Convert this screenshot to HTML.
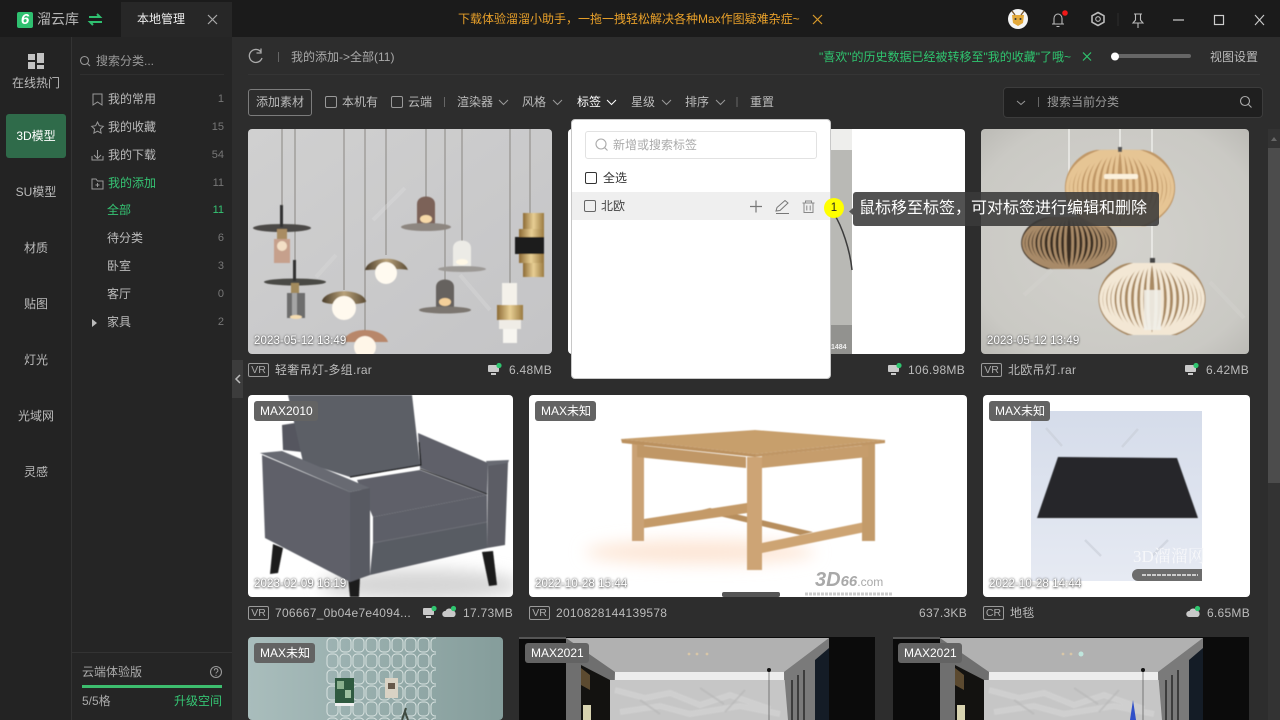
<!DOCTYPE html>
<html lang="zh">
<head>
<meta charset="utf-8">
<title>溜云库</title>
<style>
html,body{margin:0;padding:0;width:1280px;height:720px;overflow:hidden;background:#2d2d2d}
body{position:relative;font-family:"Liberation Sans","Noto Sans CJK SC",sans-serif;font-size:12px;color:#bbb}
svg{position:absolute;left:0;top:0;display:block}
.b{position:absolute}
.t{position:absolute;white-space:nowrap;line-height:16px;height:16px}
.r{text-align:right}
.c{text-align:center}
.g{color:#35c473}
.n{font-size:11px;color:#777}
.l{letter-spacing:.28px}
.tag{position:absolute;height:20px;line-height:20px;padding:0 5px 0 6px;background:#636363;border-radius:3px;color:#fff;font-size:12px;white-space:nowrap}
.date{position:absolute;color:#fff;font-size:11.5px;letter-spacing:.1px;line-height:14px;white-space:nowrap;text-shadow:0 0 2px #555,0 1px 2px #666}
.vr{position:absolute;width:19px;height:12px;border:1px solid #9a9a9a;border-radius:2px;font-size:10.5px;line-height:12px;text-align:center;color:#aaa}
.cb{position:absolute;width:10px;height:10px;border:1px solid #999;border-radius:2px}
</style>
</head>
<body>
<svg width="1280" height="720" viewBox="0 0 1280 720" xmlns="http://www.w3.org/2000/svg">
<defs>
<linearGradient id="gA" x1="0" y1="0" x2="1" y2="1"><stop offset="0" stop-color="#d0d0d0"/><stop offset="1" stop-color="#c4c4c6"/></linearGradient>
<radialGradient id="gW" cx=".5" cy=".5" r=".8"><stop offset="0" stop-color="#d3d2cd"/><stop offset=".7" stop-color="#cac9c4"/><stop offset="1" stop-color="#b2b1ac"/></radialGradient>
<linearGradient id="gGold" x1="0" y1="0" x2="1" y2="0"><stop offset="0" stop-color="#8c6a35"/><stop offset=".5" stop-color="#e8cf94"/><stop offset="1" stop-color="#9a7a40"/></linearGradient>
<linearGradient id="gBrass" x1="0" y1="0" x2="1" y2="0"><stop offset="0" stop-color="#4a3d2a"/><stop offset=".5" stop-color="#b9a27a"/><stop offset="1" stop-color="#5c4d36"/></linearGradient>
<linearGradient id="gTeal" x1="0" y1="0" x2="1" y2="0"><stop offset="0" stop-color="#a9bdbc"/><stop offset=".4" stop-color="#9ab0af"/><stop offset="1" stop-color="#859d9b"/></linearGradient>
<linearGradient id="gRugBg" x1="0" y1="0" x2="0" y2="1"><stop offset="0" stop-color="#d5dcea"/><stop offset="1" stop-color="#e6eaf3"/></linearGradient>
<pattern id="net" x="326" y="637" width="13" height="16" patternUnits="userSpaceOnUse"><rect x="1" y="1" width="11" height="14" rx="4" fill="none" stroke="#d8e2e0" stroke-width="1"/></pattern>
<filter id="s1" x="-20%" y="-20%" width="140%" height="140%"><feGaussianBlur stdDeviation=".5"/></filter>
<filter id="s3" x="-40%" y="-40%" width="180%" height="180%"><feGaussianBlur stdDeviation="3"/></filter>
<filter id="s8" x="-40%" y="-100%" width="180%" height="300%"><feGaussianBlur stdDeviation="8"/></filter>
<clipPath id="c1"><rect x="248" y="129" width="304" height="225" rx="4"/></clipPath>
<clipPath id="c2"><rect x="568" y="129" width="397" height="225" rx="4"/></clipPath>
<clipPath id="c3"><rect x="981" y="129" width="268" height="225" rx="4"/></clipPath>
<clipPath id="c4"><rect x="248" y="395" width="265" height="202" rx="4"/></clipPath>
<clipPath id="c7"><rect x="248" y="637" width="255" height="83" rx="4"/></clipPath>
<clipPath id="cageClip"><path d="M-22,-36C-38,-34-52,-18-52,0C-52,18-38,30-24,36L24,36C38,30 52,18 52,0C52,-18 38,-34 22,-36Z"/></clipPath>
<g id="stripes" fill="none" clip-path="url(#cageClip)">
<ellipse rx="4" ry="37"/><ellipse rx="10" ry="37"/><ellipse rx="16" ry="37"/><ellipse rx="22" ry="37"/><ellipse rx="28" ry="37"/><ellipse rx="33" ry="37"/><ellipse rx="38" ry="37"/><ellipse rx="42" ry="37"/><ellipse rx="46" ry="37"/><ellipse rx="49.5" ry="37"/>
</g>
<g id="room">
<rect x="519" y="637" width="356" height="83" fill="#0b0b0b"/>
<rect x="566" y="638" width="263" height="82" fill="#8d8d8d"/>
<polygon points="566,638 829,638 784,672 615,672" fill="#b1b1b1"/>
<polygon points="566,638 615,672 610,720 566,720" fill="#6f6f6f"/>
<polygon points="581,665 610,680 610,720 581,720" fill="#131210"/>
<polygon points="581,668 590,675 590,690 581,685" fill="#5c4a30"/>
<rect x="583" y="705" width="8" height="15" fill="#d8d3b0"/>
<rect x="615" y="672" width="169" height="8" fill="#ededed"/>
<rect x="610" y="680" width="178" height="40" fill="#c6c6c6"/>
<path d="M615,690l30,8 25,-5 30,12 30,-10 40,14M620,712l40,-6 30,8 50,-8 40,8" stroke="#d4d4d4" stroke-width="6" fill="none" opacity=".7" filter="url(#s1)"/>
<path d="M640,700l20,14M700,688l24,16M745,690l-20,22" stroke="#b6b6b6" stroke-width="2" fill="none" opacity=".6" filter="url(#s1)"/>
<polygon points="784,672 829,638 829,720 788,720" fill="#7a7a7a"/>
<path d="M792,680V720M798,675V720M804,670V720" stroke="#3d3d3d" stroke-width="2"/>
<polygon points="815,660 829,648 829,720 815,720" fill="#141c26"/>
<circle cx="769" cy="670" r="2" fill="#111"/><path d="M769,672V720" stroke="#555" stroke-width=".7"/>
<circle cx="689" cy="654" r="1.4" fill="#d8c6a8"/><circle cx="697" cy="654" r="1.4" fill="#d8c6a8"/><circle cx="707" cy="654" r="1.4" fill="#d8c6a8"/>
<rect x="519" y="637" width="47" height="2" fill="#555"/>
</g>
<g id="pc"><rect x="0" y="1" width="11" height="7" rx="1" fill="#c9c9c9"/><rect x="3" y="9" width="5" height="2" fill="#c9c9c9"/><circle cx="11" cy="1.5" r="2.6" fill="#2fc56f"/></g>
<g id="cloud"><path d="M2,10a3,3 0 0 1 .5,-6a4,4 0 0 1 7.2,-.5a3.4,3.4 0 0 1 .8,6.5Z" fill="#c9c9c9"/><circle cx="10.5" cy="1.5" r="2.6" fill="#2fc56f"/></g>
</defs>

<!-- card 1 -->
<g clip-path="url(#c1)">
<rect x="248" y="129" width="304" height="225" fill="url(#gA)"/>
<g stroke="#8a8782" stroke-width="1" fill="none">
<path d="M282,129V205M295,129V280M344,129V290M365,129V335M386,129V255M426,129V200M445,129V280M462,129V245M510,129V285M530,129V215"/>
</g>
<g filter="url(#s1)">
<ellipse cx="282" cy="228" rx="29" ry="4" fill="#4c4a46"/><rect x="280" y="205" width="3" height="22" fill="#333"/>
<rect x="277" y="229" width="10" height="12" fill="#a98c62"/><rect x="274" y="239" width="16" height="24" fill="#c6a08c"/><circle cx="282" cy="246" r="5" fill="#f3dfc6"/>
<ellipse cx="295" cy="282" rx="31" ry="3.5" fill="#4a4844"/><rect x="293" y="260" width="3" height="21" fill="#333"/>
<rect x="291" y="283" width="8" height="10" fill="#a28a5c"/><rect x="287" y="293" width="18" height="25" fill="#6d6d6d"/><rect x="292" y="293" width="5" height="25" fill="#a5a5a5"/><ellipse cx="296" cy="317" rx="6" ry="2" fill="#f5dcb0"/>
<path d="M322,301C326,288 362,288 366,301C368,305 324,306 322,301Z" fill="url(#gBrass)"/><circle cx="344" cy="308" r="12" fill="#fff9ee"/>
<path d="M365,335V331" stroke="#b59a60" stroke-width="2"/>
<path d="M343,342C347,326 383,326 388,342Z" fill="#b8876a"/><circle cx="365" cy="347" r="11" fill="#fff6e8"/>
<path d="M365,270C368,256 402,254 408,270C404,268 370,270 365,270Z" fill="url(#gBrass)"/><circle cx="386" cy="273" r="11" fill="#fffaf0"/>
<path d="M417,224V204C417,194 435,194 435,204V224Z" fill="#7b6259"/><ellipse cx="426" cy="219" rx="6" ry="4" fill="#f7d9a8"/><ellipse cx="426" cy="227" rx="25" ry="4" fill="#8d8680"/>
<path d="M453,266V248C453,238 471,238 471,248V266Z" fill="#ecebe6"/><ellipse cx="462" cy="262" rx="6" ry="3" fill="#fff8e6"/><ellipse cx="462" cy="269" rx="24" ry="3" fill="#9c9995"/>
<path d="M436,308V287C436,277 454,277 454,287V308Z" fill="#66625e"/><ellipse cx="445" cy="302" rx="6" ry="4" fill="#f4d09a"/><ellipse cx="445" cy="310" rx="26" ry="3.5" fill="#7c766f"/>
<rect x="523" y="213" width="21" height="64" fill="url(#gGold)"/><rect x="519" y="229" width="25" height="10" fill="url(#gGold)"/><rect x="515" y="237" width="29" height="17" fill="#1f1c1a"/><rect x="519" y="254" width="24" height="9" fill="url(#gGold)"/>
<rect x="502" y="283" width="15" height="22" fill="#f4f1ea"/><rect x="497" y="305" width="26" height="15" fill="url(#gGold)"/><rect x="499" y="320" width="22" height="9" fill="#efece6"/><rect x="503" y="329" width="14" height="14" fill="#f7f5f0"/>
</g>
<g stroke="#dcdcdc" stroke-width="4" opacity=".35"><path d="M373,220L405,188M316,277L336,255M460,275L490,310"/></g>
</g>

<!-- card 2 visible part -->
<g clip-path="url(#c2)">
<rect x="568" y="129" width="397" height="225" fill="#fff"/>
<rect x="790" y="129" width="62" height="21" fill="#eeeeec"/>
<rect x="790" y="150" width="62" height="175" fill="#b9b9b5"/>
<rect x="790" y="325" width="62" height="29" fill="#92928f"/>
<path d="M834,214C842,226 850,250 852,270" stroke="#3c3c3c" stroke-width="1.5" fill="none"/>
<text x="831" y="349" font-size="7" fill="#eee" font-family="Liberation Sans,sans-serif" font-weight="700">1484</text>
</g>

<!-- card 3 -->
<g clip-path="url(#c3)">
<rect x="981" y="129" width="268" height="225" fill="url(#gW)"/>
<path d="M1069,129V215M1120,129V150M1152,129V263" stroke="#efefec" stroke-width="1.4" fill="none"/>
<g filter="url(#s1)">
<g transform="translate(1069,243) scale(.92,.72)"><path d="M-22,-36C-38,-34-52,-18-52,0C-52,18-38,30-24,36L24,36C38,30 52,18 52,0C52,-18 38,-34 22,-36Z" fill="#3a2d22"/><use href="#stripes" stroke="#a88a68" stroke-width="3"/></g>
<g transform="translate(1120,188) scale(1.06,1.06)"><path d="M-22,-36C-38,-34-52,-18-52,0C-52,18-38,30-24,36L24,36C38,30 52,18 52,0C52,-18 38,-34 22,-36Z" fill="#c09766"/><use href="#stripes" stroke="#e6c594" stroke-width="3.2"/></g>
<rect x="1104" y="174" width="34" height="5" fill="#fbf0dc" rx="2"/>
<rect x="1118" y="147" width="4" height="5" fill="#555"/>
<rect x="1150" y="258" width="5" height="7" fill="#444"/>
<g transform="translate(1152,299) scale(1.03,1)"><path d="M-22,-36C-38,-34-52,-18-52,0C-52,18-38,30-24,36L24,36C38,30 52,18 52,0C52,-18 38,-34 22,-36Z" fill="#a98a64"/><use href="#stripes" stroke="#f3e7d4" stroke-width="3.2"/></g>
<rect x="1144" y="290" width="17" height="40" fill="#f1eee8" opacity=".9"/>
</g>
<path d="M1024,295L1052,270M1210,282L1244,318" stroke="#d6d5d1" stroke-width="4" opacity=".35"/>
</g>

<!-- card 4 armchair -->
<g clip-path="url(#c4)">
<rect x="248" y="395" width="265" height="202" fill="#fff"/>
<ellipse cx="420" cy="585" rx="100" ry="16" fill="#d6d6d6" filter="url(#s8)"/>
<g filter="url(#s1)">
<polygon points="273,544 283,548 278,573 270,574" fill="#1d1d1d"/>
<polygon points="482,552 493,551 497,585 489,586" fill="#1d1d1d"/>
<polygon points="348,578 360,578 359,597 350,597" fill="#1d1d1d"/>
<polygon points="282,425 295,423 302,452 283,450" fill="#55575f"/>
<polygon points="418,433 488,463 487,495 420,468" fill="#5f6169"/>
<polygon points="288,395 412,395 420,465 350,477 303,462" fill="#5c5e66"/>
<path d="M419,442L421,465 350,477" stroke="#111" stroke-width="1.2" fill="none"/>
<polygon points="357,480 420,470 487,495 373,517" fill="#5f6169"/>
<path d="M420,469L487,494" stroke="#222" stroke-width="1"/>
<polygon points="373,517 487,495 487,522 373,543" fill="#5d5f67"/>
<polygon points="373,543 487,522 487,548 370,575" fill="#595b63"/>
<path d="M373,543L487,522" stroke="#6d6f77" stroke-width="1"/>
<polygon points="488,463 508,462 505,545 487,548" fill="#5b5d65"/>
<polygon points="486,461 509,460 508,463 488,466" fill="#686a72"/>
<polygon points="262,455 350,492 350,582 265,538" fill="#5f6169"/>
<polygon points="260,453 282,451 370,488 350,492" fill="#686a72"/>
<polygon points="350,492 370,488 370,575 350,582" fill="#585a62"/>
</g>
</g>

<!-- card 5 table -->
<rect x="529" y="395" width="438" height="202" rx="4" fill="#fff"/>
<ellipse cx="700" cy="552" rx="115" ry="12" fill="#fde6d6" filter="url(#s8)"/>
<g filter="url(#s1)">
<polygon points="698,511 710,508 813,532 800,535" fill="#b78e5d"/>
<polygon points="644,519 747,503 747,513 644,528" fill="#c49a68"/>
<polygon points="762,543 865,522 865,532 762,553" fill="#cda473"/>
<rect x="632" y="443" width="12" height="98" fill="#caa274"/>
<rect x="862" y="443" width="13" height="98" fill="#c39b6b"/>
<polygon points="637,445 746,457 746,468 637,457" fill="#c09766"/>
<polygon points="762,456 868,445 868,457 762,468" fill="#c69d6c"/>
<rect x="747" y="457" width="15" height="113" fill="#cda474"/>
<polygon points="621,439 755,430 885,440 755,454" fill="#c79f6c"/>
<polygon points="621,439 755,454 755,457 622,443" fill="#bb915f"/>
<polygon points="755,454 885,440 885,443 755,457" fill="#c09665"/>
</g>
<text x="815" y="586" font-family="Liberation Sans,sans-serif" font-size="20" font-weight="700" font-style="italic" fill="#a9a9a9">3D<tspan font-size="15">66</tspan><tspan font-size="12" font-style="normal" font-weight="400">.com</tspan></text>
<rect x="722" y="592" width="58" height="5" rx="2" fill="#555"/>
<path d="M805,594H892" stroke="#ccc" stroke-width="3" stroke-dasharray="3 1"/>

<!-- card 6 rug -->
<rect x="983" y="395" width="267" height="202" rx="4" fill="#fff"/>
<rect x="1031" y="411" width="171" height="170" fill="url(#gRugBg)"/>
<polygon points="1058,457 1177,458 1198,518 1037,518" fill="#25272c" filter="url(#s1)"/>
<path d="M1046,428l16,18M1122,447l16,-18M1085,540l16,16M1152,556l16,-16" stroke="#c9ced8" stroke-width="2.5" opacity=".6"/>
<text x="1133" y="562" font-family="Liberation Serif,Noto Serif CJK SC,serif" font-size="17" fill="#f6f7fa">3D溜溜网</text>
<path d="M1138,569H1202V581H1138A6,6 0 0 1 1138,569Z" fill="#6c6c6c"/>
<path d="M1142,575H1198" stroke="#ccc" stroke-width="2" stroke-dasharray="4 1"/>

<!-- row 3 -->
<g clip-path="url(#c7)">
<rect x="248" y="637" width="255" height="83" fill="url(#gTeal)"/>
<rect x="326" y="637" width="110" height="83" fill="url(#net)"/>
<rect x="335" y="678" width="19" height="27" fill="#2f5a40"/><rect x="337" y="681" width="7" height="8" fill="#8ab08e"/><rect x="345" y="690" width="6" height="8" fill="#9dc0a0"/><rect x="335" y="703" width="19" height="3" fill="#f0f0f0"/>
<rect x="385" y="678" width="13" height="20" fill="#d9d2c4"/><rect x="388" y="683" width="7" height="6" fill="#66584a"/>
<path d="M402,720L406,708M408,720L405,712" stroke="#3f4b40" stroke-width="2"/>
</g>
<use href="#room"/>
<use href="#room" x="374"/>
<path d="M1133,700L1136,720H1130Z" fill="#3050c8"/>
<circle cx="1081" cy="654" r="2.5" fill="#bfe6dd"/>

<!-- status icons -->
<use href="#pc" x="488" y="364"/>
<use href="#pc" x="888" y="364"/>
<use href="#pc" x="1185" y="364"/>
<use href="#pc" x="423" y="607"/>
<use href="#cloud" x="443" y="607"/>
<use href="#cloud" x="1187" y="607"/>
</svg>

<!-- chrome -->
<div class="b" style="left:0;top:0;width:1280px;height:37px;background:#1b1b1b"></div>
<div class="b" style="left:121px;top:2px;width:111px;height:35px;background:#272727"></div>
<div class="b" style="left:0;top:37px;width:71px;height:683px;background:#232323;border-right:1px solid #333"></div>
<div class="b" style="left:72px;top:37px;width:160px;height:683px;background:#252525"></div>
<div class="b" style="left:1268px;top:129px;width:12px;height:591px;background:#333"></div>
<div class="b" style="left:1268px;top:148px;width:12px;height:335px;background:#4c4c4c"></div>
<div class="b" style="left:232px;top:360px;width:11px;height:38px;background:#3c3c3c"></div>
<div class="b" style="left:1003px;top:87px;width:258px;height:29px;background:#1f1f1f;border:1px solid #3c3c3c;border-radius:4px"></div>
<div class="b" style="left:248px;top:74px;width:1012px;height:1px;background:#353535"></div>
<div class="b" style="left:80px;top:74px;width:144px;height:1px;background:#2f2f2f"></div>
<div class="b" style="left:72px;top:652px;width:160px;height:1px;background:#333"></div>
<div class="b" style="left:82px;top:685px;width:140px;height:3px;background:#3dbd6e"></div>
<div class="b" style="left:6px;top:114px;width:60px;height:44px;background:#2f6b4a;border-radius:3px"></div>

<!-- chrome icons -->
<svg width="1280" height="720" viewBox="0 0 1280 720" xmlns="http://www.w3.org/2000/svg" style="pointer-events:none">
<rect x="17" y="12" width="16" height="16" rx="2" fill="#2fc070"/>
<path d="M89,17H100L97,14M102,22H90L93,25" fill="none" stroke="#2fc070" stroke-width="2"/>
<path d="M208,15L217,24M217,15L208,24" stroke="#aaa" stroke-width="1.2"/>
<path d="M813,15L822,24M822,15L813,24" stroke="#d99a2b" stroke-width="1.2"/>
<circle cx="1018" cy="19" r="10" fill="#f4f4f4"/>
<path d="M1012,15L1024,15 1023,23 1018,26 1013,23Z" fill="#e3a93b"/>
<path d="M1012,11l3,4M1024,11l-3,4" stroke="#7b5a33" stroke-width="1.4"/>
<circle cx="1015.5" cy="19" r="1" fill="#333"/><circle cx="1020.5" cy="19" r="1" fill="#333"/>
<path d="M1052,24H1064M1054,24V18.5A4,4.5 0 0 1 1062,18.5V24M1056.5,26.5H1059.5" fill="none" stroke="#bbb" stroke-width="1.1"/>
<circle cx="1065" cy="13" r="2.8" fill="#f01818"/>
<path d="M1098,12.5l6,3.300v6.400l-6,3.300-6,-3.300v-6.400Z" fill="none" stroke="#bbb" stroke-width="1.6" stroke-linejoin="round"/><circle cx="1098" cy="19" r="2.3" fill="none" stroke="#bbb" stroke-width="1.1"/>
<path d="M1118,13V26" stroke="#2e2e2e"/>
<path d="M1134,14H1142M1135.5,14V20L1133,23H1143L1140.5,20V14M1138,23V28" fill="none" stroke="#bbb" stroke-width="1.1"/>
<path d="M1173,20H1184" stroke="#ccc" stroke-width="1.2"/>
<rect x="1214.5" y="15.5" width="9" height="9" fill="none" stroke="#ccc" stroke-width="1.2"/>
<path d="M1255,15L1264,25M1264,15L1255,25" stroke="#ccc" stroke-width="1.1"/>
<rect x="28" y="54" width="7" height="6" fill="#c2c2c2"/><rect x="37" y="53" width="7" height="10" fill="#c2c2c2"/><rect x="28" y="62" width="7" height="7" fill="#c2c2c2"/><rect x="37" y="65" width="7" height="4" fill="#c2c2c2"/>
<circle cx="84.5" cy="60.5" r="4" fill="none" stroke="#999" stroke-width="1.1"/><path d="M87.5,63.5L90,66" stroke="#999" stroke-width="1.1"/>
<path d="M93,94H102V105L97.5,102 93,105Z" fill="none" stroke="#999"/>
<path d="M97.5,122l1.800,3.700 4,.6-2.900,2.800.7,4-3.600,-1.900-3.600,1.900.7,-4-2.900,-2.800 4,-.6Z" fill="none" stroke="#999"/>
<path d="M97.5,150V158M94,155l3.500,3.500 3.500,-3.500M92,156V160H103V156" fill="none" stroke="#999"/>
<path d="M92,179H96L97.5,181H103V189H92ZM97.5,183V187M95.5,185H99.5" fill="none" stroke="#999"/>
<path d="M92,319L97,323 92,327Z" fill="#bbb"/>
<circle cx="216" cy="672" r="5.5" fill="none" stroke="#999" stroke-width="1.1"/>
<path d="M214.3,670.5a1.800,1.800 0 1 1 2.700,1.500c-.7,.4-1,.8-1,1.500" fill="none" stroke="#999"/><circle cx="216" cy="675.3" r=".6" fill="#999"/>
<path d="M261,52A6.5,6.5 0 1 0 262,58M261,48.5V53H256.5" fill="none" stroke="#aaa" stroke-width="1.3"/>
<path d="M278.5,52V62" stroke="#666"/>
<path d="M1083,52.5L1091,60.5M1091,52.5L1083,60.5" stroke="#2fc56f" stroke-width="1.2"/>
<rect x="1112" y="54" width="79" height="4" rx="2" fill="#666"/><circle cx="1115" cy="56.5" r="4" fill="#fff"/>
<g fill="none" stroke="#999" stroke-width="1">
<path d="M499,100l4.500,4.500 4.500,-4.500M553,100l4.500,4.500 4.500,-4.500M662,100l4.500,4.500 4.500,-4.500M716,100l4.500,4.500 4.500,-4.500"/>
<path d="M607,100l4.500,4.500 4.500,-4.500" stroke="#fff"/>
<path d="M1017,101l4,3.500 4,-3.500"/>
</g>
<path d="M444.5,97V107M737,97V107M1038.5,97V107" stroke="#666"/>
<circle cx="1245" cy="101" r="4.5" fill="none" stroke="#aaa" stroke-width="1.1"/><path d="M1248.5,104.5L1251.5,107.5" stroke="#aaa" stroke-width="1.1"/>
<path d="M240,375L236,379 240,383" fill="none" stroke="#bbb" stroke-width="1.5"/>
<path d="M1271,141L1274,137 1277,141Z" fill="#666"/>
</svg>

<!-- title bar text -->
<div class="t c" style="left:17px;top:12px;width:16px;color:#fff;font-size:15px;font-weight:700;font-style:italic">6</div>
<div class="t" style="left:37px;top:11px;font-size:14px;color:#b5b5b5">溜云库</div>
<div class="t" style="left:137px;top:11px;color:#eee">本地管理</div>
<div class="t" style="left:458px;top:11px;color:#e8a02a;width:346px">下载体验溜溜小助手，一拖一拽轻松解决各种Max作图疑难杂症~</div>

<!-- nav -->
<div class="t c" style="left:0;top:75px;width:72px;color:#bbb">在线热门</div>
<div class="t c" style="left:0;top:128px;width:72px;color:#fff">3D模型</div>
<div class="t c" style="left:0;top:184px;width:72px">SU模型</div>
<div class="t c" style="left:0;top:240px;width:72px">材质</div>
<div class="t c" style="left:0;top:296px;width:72px">贴图</div>
<div class="t c" style="left:0;top:352px;width:72px">灯光</div>
<div class="t c" style="left:0;top:408px;width:72px">光域网</div>
<div class="t c" style="left:0;top:464px;width:72px">灵感</div>

<!-- category -->
<div class="t" style="left:96px;top:53px;color:#999">搜索分类...</div>
<div class="t" style="left:108px;top:91px">我的常用</div><div class="t r n" style="left:184px;top:91px;width:40px">1</div>
<div class="t" style="left:108px;top:119px">我的收藏</div><div class="t r n" style="left:184px;top:119px;width:40px">15</div>
<div class="t" style="left:108px;top:147px">我的下载</div><div class="t r n" style="left:184px;top:147px;width:40px">54</div>
<div class="t g" style="left:108px;top:175px">我的添加</div><div class="t r n" style="left:184px;top:175px;width:40px">11</div>
<div class="t g" style="left:107px;top:202px">全部</div><div class="t r n" style="left:184px;top:202px;width:40px;color:#35c473">11</div>
<div class="t" style="left:107px;top:230px">待分类</div><div class="t r n" style="left:184px;top:230px;width:40px">6</div>
<div class="t" style="left:107px;top:258px">卧室</div><div class="t r n" style="left:184px;top:258px;width:40px">3</div>
<div class="t" style="left:107px;top:286px">客厅</div><div class="t r n" style="left:184px;top:286px;width:40px">0</div>
<div class="t" style="left:107px;top:314px">家具</div><div class="t r n" style="left:184px;top:314px;width:40px">2</div>
<div class="t" style="left:82px;top:664px;color:#aaa">云端体验版</div>
<div class="t" style="left:82px;top:693px;color:#aaa">5/5格</div>
<div class="t r g" style="left:162px;top:693px;width:60px">升级空间</div>

<!-- toolbar -->
<div class="t" style="left:291px;top:49px;color:#aaa">我的添加-&gt;全部(11)</div>
<div class="t" style="left:819px;top:49px;color:#2fc56f;width:258px">"喜欢"的历史数据已经被转移至"我的收藏"了哦~</div>
<div class="t" style="left:1210px;top:49px">视图设置</div>
<div class="b" style="left:248px;top:89px;width:62px;height:25px;border:1px solid #7c7c7c;border-radius:3px;line-height:25px;text-align:center">添加素材</div>
<div class="cb" style="left:325px;top:96px"></div>
<div class="t" style="left:342px;top:94px">本机有</div>
<div class="cb" style="left:391px;top:96px"></div>
<div class="t" style="left:408px;top:94px">云端</div>
<div class="t" style="left:457px;top:94px">渲染器</div>
<div class="t" style="left:522px;top:94px">风格</div>
<div class="t" style="left:577px;top:94px;color:#fff">标签</div>
<div class="t" style="left:631px;top:94px">星级</div>
<div class="t" style="left:685px;top:94px">排序</div>
<div class="t" style="left:750px;top:94px">重置</div>
<div class="t" style="left:1047px;top:94px;color:#999">搜索当前分类</div>

<!-- card overlays -->
<div class="date" style="left:254px;top:334px">2023-05-12 13:49</div>
<div class="date" style="left:987px;top:334px">2023-05-12 13:49</div>
<div class="date" style="left:254px;top:577px">2023-02-09 16:19</div>
<div class="date" style="left:535px;top:577px">2022-10-28 15:44</div>
<div class="date" style="left:989px;top:577px">2022-10-28 14:44</div>
<div class="tag" style="left:254px;top:401px">MAX2010</div>
<div class="tag" style="left:535px;top:401px">MAX未知</div>
<div class="tag" style="left:989px;top:401px">MAX未知</div>
<div class="tag" style="left:254px;top:643px">MAX未知</div>
<div class="tag" style="left:525px;top:643px">MAX2021</div>
<div class="tag" style="left:898px;top:643px">MAX2021</div>

<div class="vr" style="left:248px;top:363px">VR</div><div class="t l" style="left:275px;top:362px">轻奢吊灯-多组.rar</div><div class="t r l" style="left:452px;top:362px;width:100px">6.48MB</div>
<div class="t r l" style="left:865px;top:362px;width:100px">106.98MB</div>
<div class="vr" style="left:981px;top:363px">VR</div><div class="t l" style="left:1008px;top:362px">北欧吊灯.rar</div><div class="t r l" style="left:1149px;top:362px;width:100px">6.42MB</div>
<div class="vr" style="left:248px;top:606px">VR</div><div class="t l" style="left:275px;top:605px">706667_0b04e7e4094...</div><div class="t r l" style="left:413px;top:605px;width:100px">17.73MB</div>
<div class="vr" style="left:529px;top:606px">VR</div><div class="t l" style="left:556px;top:605px">2010828144139578</div><div class="t r l" style="left:867px;top:605px;width:100px">637.3KB</div>
<div class="vr" style="left:983px;top:606px">CR</div><div class="t l" style="left:1010px;top:605px">地毯</div><div class="t r l" style="left:1150px;top:605px;width:100px">6.65MB</div>

<!-- popup -->
<div class="b" style="left:571px;top:119px;width:258px;height:258px;background:#fff;border:1px solid #c8c8c8;border-radius:4px"></div>
<div class="b" style="left:585px;top:131px;width:230px;height:26px;border:1px solid #e2e2e2;border-radius:3px;background:#fff"></div>
<div class="b" style="left:572px;top:192px;width:258px;height:28px;background:#efefef"></div>
<div class="t" style="left:613px;top:137px;color:#aaa">新增或搜索标签</div>
<div class="cb" style="left:585px;top:172px;border-color:#333"></div>
<div class="t" style="left:603px;top:170px;color:#333">全选</div>
<div class="cb" style="left:584px;top:200px;border-color:#666"></div>
<div class="t" style="left:601px;top:198px;color:#444">北欧</div>
<svg width="1280" height="720" viewBox="0 0 1280 720" xmlns="http://www.w3.org/2000/svg" style="pointer-events:none">
<circle cx="601" cy="144" r="5" fill="none" stroke="#aaa" stroke-width="1.1"/><path d="M604.8,147.8L607.5,150.5" stroke="#aaa" stroke-width="1.1"/>
<path d="M756,200.5V212.5M750,206.5H762" stroke="#777" stroke-width="1.2"/>
<path d="M776,211L777,207.5 785,200.5 788,203 780,210.5ZM776,213.5H789" fill="none" stroke="#777" stroke-width="1"/>
<path d="M802.5,203H814.5M805.5,203V201H811.5V203M804,203V212.5H813V203M806.8,205.5V210.5M810.2,205.5V210.5" fill="none" stroke="#888" stroke-width="1"/>
<circle cx="834" cy="208" r="10" fill="#ffff00"/>
<path d="M853,208L849,211.5 853,215Z" fill="#555"/>
</svg>
<div class="t c" style="left:824px;top:200px;width:20px;color:#222;font-size:11.5px">1</div>
<div class="b" style="left:853px;top:192px;width:306px;height:34px;background:rgba(58,58,58,.88);border-radius:3px"></div>
<div class="t" style="left:859px;top:199px;width:292px;color:#fff;font-size:16px;line-height:20px;height:20px">鼠标移至标签，可对标签进行编辑和删除</div>
</body>
</html>
